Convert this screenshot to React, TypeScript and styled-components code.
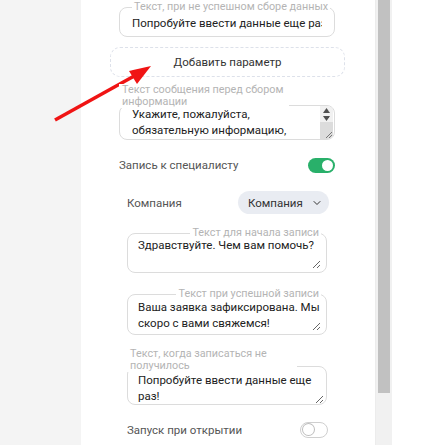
import React from 'react';
import styled, { createGlobalStyle } from 'styled-components';
import { ChevronDown } from 'lucide-react';

const FONT = 'Roboto, "Noto Sans", sans-serif';

const Global = createGlobalStyle`
  html, body { margin: 0; padding: 0; background: #fff; }
  body { font-family: ${FONT}; }
  * { box-sizing: border-box; }
`;

const Page = styled.div`
  position: relative;
  display: flex;
  width: 443px;
  height: 445px;
  overflow: hidden;
  background: #fff;
`;

const Sidebar = styled.div`
  flex: none;
  width: 81px;
  background: #f4f4f4;
`;

const Panel = styled.div`
  flex: none;
  display: flex;
  width: 311px;
  height: 445px;
  background: #fff;
`;

const Content = styled.div`
  flex: none;
  display: flex;
  flex-direction: column;
  width: 294px;
  padding: 0 40px 0 38px;
`;

const ScrollTrack = styled.div`
  flex: none;
  width: 17px;
  height: 445px;
  padding: 0 2px;
  background: #f1f1f1;
  border-left: 1px solid #ececec;
`;

const ScrollThumb = styled.div<{ $h: number }>`
  height: ${p => p.$h}px;
  background: #c1c1c1;
`;

const Fieldset = styled.fieldset<{ $mt: number; $nested?: boolean }>`
  margin: ${p => p.$mt}px ${p => (p.$nested ? 8 : 0)}px 0;
  padding: 0 ${p => (p.$nested ? 5 : 12)}px ${p => (p.$nested ? 3 : 4)}px
    ${p => (p.$nested ? 6 : 12)}px;
  border: 1px solid #dcdcdc;
  border-radius: 8px;
  min-width: 0;
`;

const Legend = styled.legend<{ $right?: boolean }>`
  padding: 0 2px;
  margin-left: ${p => (p.$right ? 'auto' : '0')};
  font-size: 10.8px;
  line-height: 14px;
  color: #b4b4b4;
  white-space: nowrap;
`;

const Input = styled.input`
  display: block;
  width: 100%;
  height: 18px;
  border: 0;
  padding: 0;
  outline: none;
  font: 11.5px/18px ${FONT};
  color: #222;
  background: transparent;
`;

const Area = styled.textarea<{ $mt?: number; $pl?: number; $pr?: number; $h?: number; $noResize?: boolean }>`
  display: block;
  width: 100%;
  height: ${p => p.$h ?? 32}px;
  border: 0;
  margin: ${p => p.$mt ?? 0}px 0 0;
  padding: 0 ${p => p.$pr ?? 0}px 0 ${p => p.$pl ?? 0}px;
  outline: none;
  resize: ${p => (p.$noResize ? 'none' : 'vertical')};
  overflow: hidden;
  font: 11.5px/16px ${FONT};
  color: #222;
  background: transparent;
`;

const AddButton = styled.button`
  margin: 10px -10px 0 -9px;
  height: 30px;
  border: 1px dashed #dde1ea;
  border-radius: 10px;
  background: #fff;
  font: 11.5px ${FONT};
  color: #333;
  cursor: pointer;
`;

const Wrap = styled.div<{ $mt: number; $nested?: boolean }>`
  display: flex;
  flex-direction: column;
  margin: ${p => p.$mt}px ${p => (p.$nested ? 8 : 0)}px 0;
`;

const FloatLabel = styled.div`
  position: relative;
  z-index: 1;
  align-self: flex-start;
  max-width: 170px;
  padding: 0 2px 0 3px;
  background: #fff;
  font-size: 10.8px;
  line-height: 12px;
  color: #b4b4b4;
`;

const Box = styled.div<{ $mt: number; $pl: number; $pt: number }>`
  position: relative;
  margin-top: ${p => p.$mt}px;
  padding: ${p => p.$pt}px 2px 0 ${p => p.$pl}px;
  border: 1px solid #dcdcdc;
  border-radius: 8px;
  overflow: hidden;
`;

const FakeBar = styled.div`
  position: absolute;
  top: 0;
  right: 1px;
  bottom: 0;
  width: 13px;
  display: flex;
  flex-direction: column;
  background: #f1f1f1;
`;

const BarButtons = styled.div`
  flex: none;
  height: 16px;
  display: flex;
  flex-direction: column;
  align-items: center;
  justify-content: space-between;
  padding: 2px 0 1px;
`;

const BarRest = styled.div`
  flex: 1;
  position: relative;
  background: #dcdcdc;
`;

const Grip = styled.svg`
  position: absolute;
  right: 1px;
  bottom: 1px;
`;

const Row = styled.div<{ $mt: number; $ml: number; $mr: number; $h: number }>`
  display: flex;
  align-items: center;
  justify-content: space-between;
  height: ${p => p.$h}px;
  margin: ${p => p.$mt}px ${p => p.$mr}px 0 ${p => p.$ml}px;
`;

const RowLabel = styled.span`
  font-size: 11.5px;
  color: #555;
`;

const Toggle = styled.div<{ $on?: boolean }>`
  position: relative;
  width: ${p => (p.$on ? 27 : 28)}px;
  height: ${p => (p.$on ? 15 : 16)}px;
  border-radius: 8px;
  background: ${p => (p.$on ? '#29b06a' : '#fff')};
  border: ${p => (p.$on ? 'none' : '1px solid #cfcfcf')};
  &::after {
    content: '';
    position: absolute;
    top: ${p => (p.$on ? 2 : 1)}px;
    left: ${p => (p.$on ? 14 : 2)}px;
    width: 11px;
    height: 11px;
    border-radius: 50%;
    background: #fff;
    box-shadow: ${p => (p.$on ? 'none' : '0 0 0 1px #bdbdbd')};
  }
`;

const Select = styled.div`
  display: flex;
  align-items: center;
  justify-content: space-between;
  width: 91px;
  height: 23px;
  padding: 0 6px 0 10px;
  border-radius: 12px;
  background: #e9ecf2;
  font-size: 11.5px;
  color: #333;
`;

const Arrow = styled.svg`
  position: absolute;
  left: 0;
  top: 0;
  pointer-events: none;
`;

export default function App() {
  return (
    <Page>
      <Global />
      <Sidebar />
      <Panel>
        <Content>
          <Fieldset $mt={0}>
            <Legend>Текст, при не успешном сборе данных</Legend>
            <Input defaultValue="Попробуйте ввести данные еще раз" />
          </Fieldset>

          <AddButton>Добавить параметр</AddButton>

          <Wrap $mt={7}>
            <FloatLabel>Текст сообщения перед сбором информации</FloatLabel>
            <Box $mt={-3} $pl={12} $pt={0}>
              <Area
                $noResize
                $pr={14}
                $h={33}
                defaultValue="Укажите, пожалуйста, обязательную информацию, чтобы мы смогли связаться с вами"
              />
              <FakeBar>
                <BarButtons>
                  <svg width="7" height="5" viewBox="0 0 7 5">
                    <polygon points="3.5,0 7,5 0,5" fill="#505050" />
                  </svg>
                  <svg width="7" height="5" viewBox="0 0 7 5">
                    <polygon points="0,0 7,0 3.5,5" fill="#505050" />
                  </svg>
                </BarButtons>
                <BarRest>
                  <Grip width="7" height="7" viewBox="0 0 7 7">
                    <line x1="1" y1="7" x2="7" y2="1" stroke="#777" strokeWidth="1" />
                    <line x1="4" y1="7" x2="7" y2="4" stroke="#777" strokeWidth="1" />
                  </Grip>
                </BarRest>
              </FakeBar>
            </Box>
          </Wrap>

          <Row $mt={17} $ml={0} $mr={0} $h={16}>
            <RowLabel>Запись к специалисту</RowLabel>
            <Toggle $on />
          </Row>

          <Row $mt={18} $ml={8} $mr={6} $h={23}>
            <RowLabel>Компания</RowLabel>
            <Select>
              Компания
              <ChevronDown size={12} strokeWidth={2} color="#333" />
            </Select>
          </Row>

          <Fieldset $mt={12} $nested>
            <Legend $right>Текст для начала записи</Legend>
            <Area $mt={-3} $pl={4} defaultValue="Здравствуйте. Чем вам помочь?" />
          </Fieldset>

          <Fieldset $mt={14} $nested>
            <Legend $right>Текст при успешной записи</Legend>
            <Area $mt={-2} $pl={4} defaultValue="Ваша заявка зафиксирована. Мы скоро с вами свяжемся!" />
          </Fieldset>

          <Wrap $mt={13} $nested>
            <FloatLabel>Текст, когда записаться не получилось</FloatLabel>
            <Box $mt={-6} $pl={10} $pt={5}>
              <Area defaultValue="Попробуйте ввести данные еще раз!" />
            </Box>
          </Wrap>

          <Row $mt={17} $ml={8} $mr={7} $h={16}>
            <RowLabel>Запуск при открытии</RowLabel>
            <Toggle />
          </Row>
        </Content>
        <ScrollTrack>
          <ScrollThumb $h={393} />
        </ScrollTrack>
      </Panel>
      <Arrow width="443" height="445" viewBox="0 0 443 445">
        <line x1="55" y1="120" x2="136" y2="75" stroke="#f01414" strokeWidth="3.5" />
        <polygon points="151,66 129,71 137,84" fill="#f01414" />
      </Arrow>
    </Page>
  );
}
